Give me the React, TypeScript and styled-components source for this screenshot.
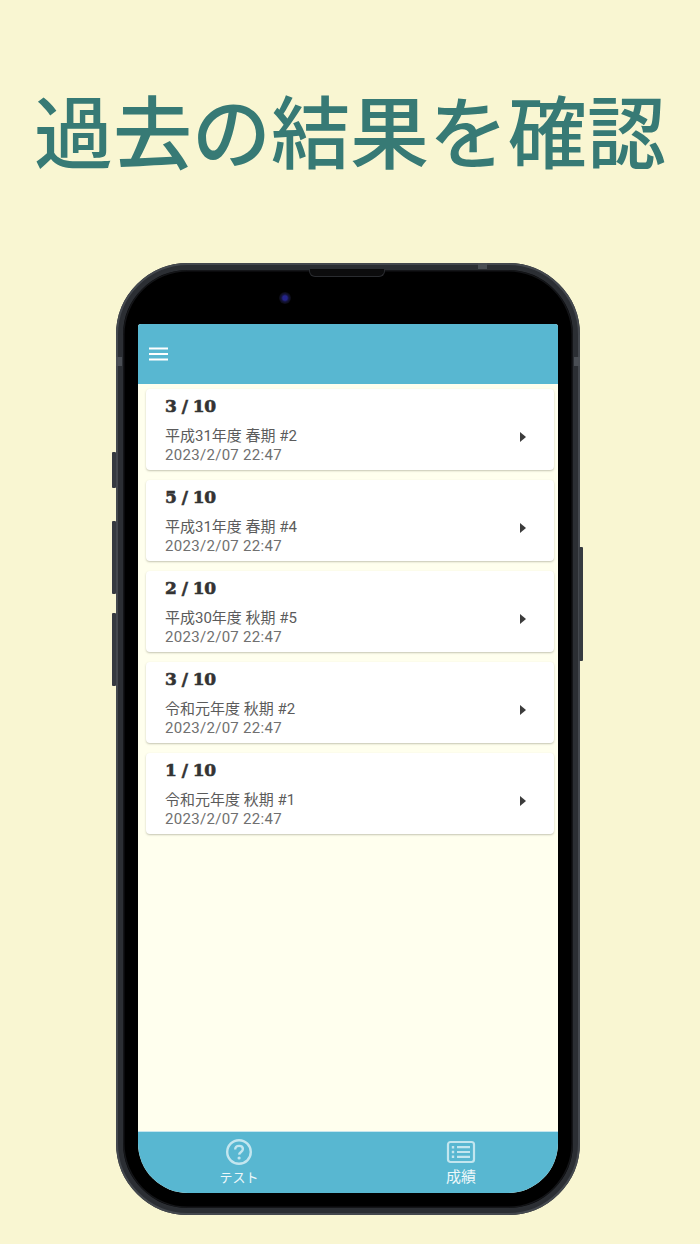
import React from 'react';
import styled, { createGlobalStyle } from 'styled-components';

const GlobalStyle = createGlobalStyle`
  html, body {
    margin: 0;
    padding: 0;
    background: #f9f6d2;
  }
`;

const Page = styled.div`
  width: 700px;
  height: 1244px;
  overflow: hidden;
  display: flex;
  flex-direction: column;
  background: #f9f6d2;
`;

const Headline = styled.h1`
  margin: 0;
  height: 263px;
  padding-top: 79px;
  box-sizing: border-box;
  text-align: center;
  font-family: 'Noto Sans CJK JP', sans-serif;
  font-size: 79px;
  line-height: 100px;
  font-weight: 500;
  color: #377a75;
  white-space: nowrap;
`;

const Phone = styled.div`
  position: relative;
  box-sizing: border-box;
  width: 464px;
  height: 952px;
  margin-left: 116px;
  padding: 54px 15px 15px;
  background: #000;
  border: 7px solid #2b2e33;
  border-radius: 72px;
  box-shadow: inset 0 0 0 1.5px #141518;

  &::before {
    content: '';
    position: absolute;
    inset: -7px;
    border: 2px solid #44484e;
    border-radius: 72px;
  }
`;

const SideButton = styled.div<{ $side: 'left' | 'right'; $top: number; $height: number }>`
  position: absolute;
  top: ${({ $top }) => $top}px;
  ${({ $side }) => ($side === 'left' ? 'left: -11px;' : 'right: -10px;')}
  width: 4px;
  height: ${({ $height }) => $height}px;
  background: #363a40;
  border-radius: 1px;
`;

const Band = styled.div<{ $x?: number; $y?: number; $side?: 'left' | 'right' }>`
  position: absolute;
  background: #4a4e54;
  ${({ $x }) => ($x !== undefined ? `left: ${$x}px; width: 9px; height: 6px; top: -7px;` : '')}
  ${({ $y, $side }) =>
    $y !== undefined ? `top: ${$y}px; height: 9px; width: 6px; ${$side === 'right' ? 'right: -7px;' : 'left: -7px;'}` : ''}
`;

const Speaker = styled.div`
  position: absolute;
  top: -1px;
  left: 186px;
  width: 76px;
  height: 8px;
  box-sizing: border-box;
  background: #0c0c0d;
  border: 1px solid #2a2c30;
  border-top: none;
  border-radius: 0 0 6px 6px;
`;

const Camera = styled.div`
  position: absolute;
  top: 22px;
  left: 156px;
  width: 12px;
  height: 12px;
  border-radius: 50%;
  background: radial-gradient(circle, #24248a 0 25%, #14143a 45%, #0b0b12 70%, #000 100%);
`;

const Screen = styled.div`
  width: 420px;
  height: 869px;
  display: flex;
  flex-direction: column;
  overflow: hidden;
  background: #ffffee;
  border-radius: 3px 3px 50px 50px;
`;

const Header = styled.header`
  flex: none;
  height: 60px;
  display: flex;
  align-items: center;
  padding-left: 11px;
  background: #58b7d1;
`;

const MenuIcon = styled.svg`
  width: 19px;
  height: 14px;
  display: block;
`;

const ResultList = styled.div`
  flex: 1;
  display: flex;
  flex-direction: column;
  gap: 10px;
  padding: 5px 4px 0 8px;
`;

const Card = styled.div`
  position: relative;
  box-sizing: border-box;
  height: 81px;
  display: flex;
  align-items: center;
  padding: 0 28px 0 19px;
  background: #fff;
  border-radius: 4px;
  box-shadow: 0 1px 2px rgba(90, 90, 70, 0.35);
`;

const CardBody = styled.div`
  flex: 1;
  display: flex;
  flex-direction: column;
`;

const Score = styled.div`
  font-family: 'DejaVu Serif', serif;
  font-size: 17px;
  line-height: 22px;
  font-weight: 700;
  letter-spacing: -0.5px;
  color: #333;
  -webkit-text-stroke: 0.6px #333;
`;

const Exam = styled.div`
  margin-top: 9px;
  font-family: Roboto, 'Noto Sans CJK JP', sans-serif;
  font-size: 15px;
  line-height: 20px;
  color: #5b5b5b;
`;

const Timestamp = styled.div`
  font-family: Roboto, 'Noto Sans CJK JP', sans-serif;
  font-size: 15px;
  line-height: 19px;
  letter-spacing: 0.3px;
  color: #707070;
`;

const Caret = styled.div`
  width: 0;
  height: 0;
  margin-top: 14px;
  border-left: 6px solid #3c3c3c;
  border-top: 5px solid transparent;
  border-bottom: 5px solid transparent;
`;

const TabBar = styled.nav`
  flex: none;
  height: 62px;
  box-sizing: border-box;
  display: flex;
  justify-content: center;
  gap: 142px;
  padding: 7px 0 0 4px;
  background: #58b7d1;
  border-top: 1px solid #c5e6ee;
`;

const Tab = styled.div`
  width: 80px;
  display: flex;
  flex-direction: column;
  align-items: center;
`;

const TabIcon = styled.svg`
  width: 30px;
  height: 26px;
  display: block;
  color: #c3e6ef;
`;

const TabLabel = styled.span<{ $size: number }>`
  margin-top: 3px;
  font-family: 'Noto Sans CJK JP', sans-serif;
  font-size: ${({ $size }) => $size}px;
  line-height: ${({ $size }) => ($size > 13 ? 16 : 18)}px;
  color: #eef8fa;
`;

const results = [
  { score: '3 / 10', exam: '平成31年度 春期 #2' },
  { score: '5 / 10', exam: '平成31年度 春期 #4' },
  { score: '2 / 10', exam: '平成30年度 秋期 #5' },
  { score: '3 / 10', exam: '令和元年度 秋期 #2' },
  { score: '1 / 10', exam: '令和元年度 秋期 #1' },
];

const App = () => {
  return (
    <Page>
      <GlobalStyle />
      <Headline>過去の結果を確認</Headline>
      <Phone>
        <SideButton $side="left" $top={182} $height={36} />
        <SideButton $side="left" $top={251} $height={73} />
        <SideButton $side="left" $top={343} $height={73} />
        <SideButton $side="right" $top={277} $height={114} />
        <Band $x={355} />
        <Band $y={87} $side="left" />
        <Band $y={87} $side="right" />
        <Speaker />
        <Camera />
        <Screen>
          <Header>
            <MenuIcon viewBox="0 0 19 14">
              <path d="M0 1.5h19M0 7h19M0 12.5h19" stroke="#fff" strokeWidth="2" />
            </MenuIcon>
          </Header>
          <ResultList>
            {results.map((result, i) => (
              <Card key={i}>
                <CardBody>
                  <Score>{result.score}</Score>
                  <Exam>{result.exam}</Exam>
                  <Timestamp>2023/2/07 22:47</Timestamp>
                </CardBody>
                <Caret />
              </Card>
            ))}
          </ResultList>
          <TabBar>
            <Tab>
              <TabIcon viewBox="0 0 30 26">
                <circle cx="15" cy="13" r="11.8" fill="none" stroke="currentColor" strokeWidth="2.4" />
                <path
                  d="M11.2 10.4c0-2.2 1.7-3.5 3.9-3.5 2.2 0 3.8 1.3 3.8 3.2 0 2.8-3.6 2.8-3.8 5.6"
                  fill="none"
                  stroke="currentColor"
                  strokeWidth="2.4"
                />
                <circle cx="15.1" cy="19" r="1.6" fill="currentColor" />
              </TabIcon>
              <TabLabel $size={13}>テスト</TabLabel>
            </Tab>
            <Tab>
              <TabIcon viewBox="0 0 30 26">
                <rect x="2" y="3" width="26" height="20" rx="2.5" fill="none" stroke="currentColor" strokeWidth="2.2" />
                <path d="M11 8.2h13M11 13h13M11 17.8h13" stroke="currentColor" strokeWidth="2.2" />
                <path d="M5.8 8.2h2.4M5.8 13h2.4M5.8 17.8h2.4" stroke="currentColor" strokeWidth="2.6" />
              </TabIcon>
              <TabLabel $size={15}>成績</TabLabel>
            </Tab>
          </TabBar>
        </Screen>
      </Phone>
    </Page>
  );
};

export default App;
